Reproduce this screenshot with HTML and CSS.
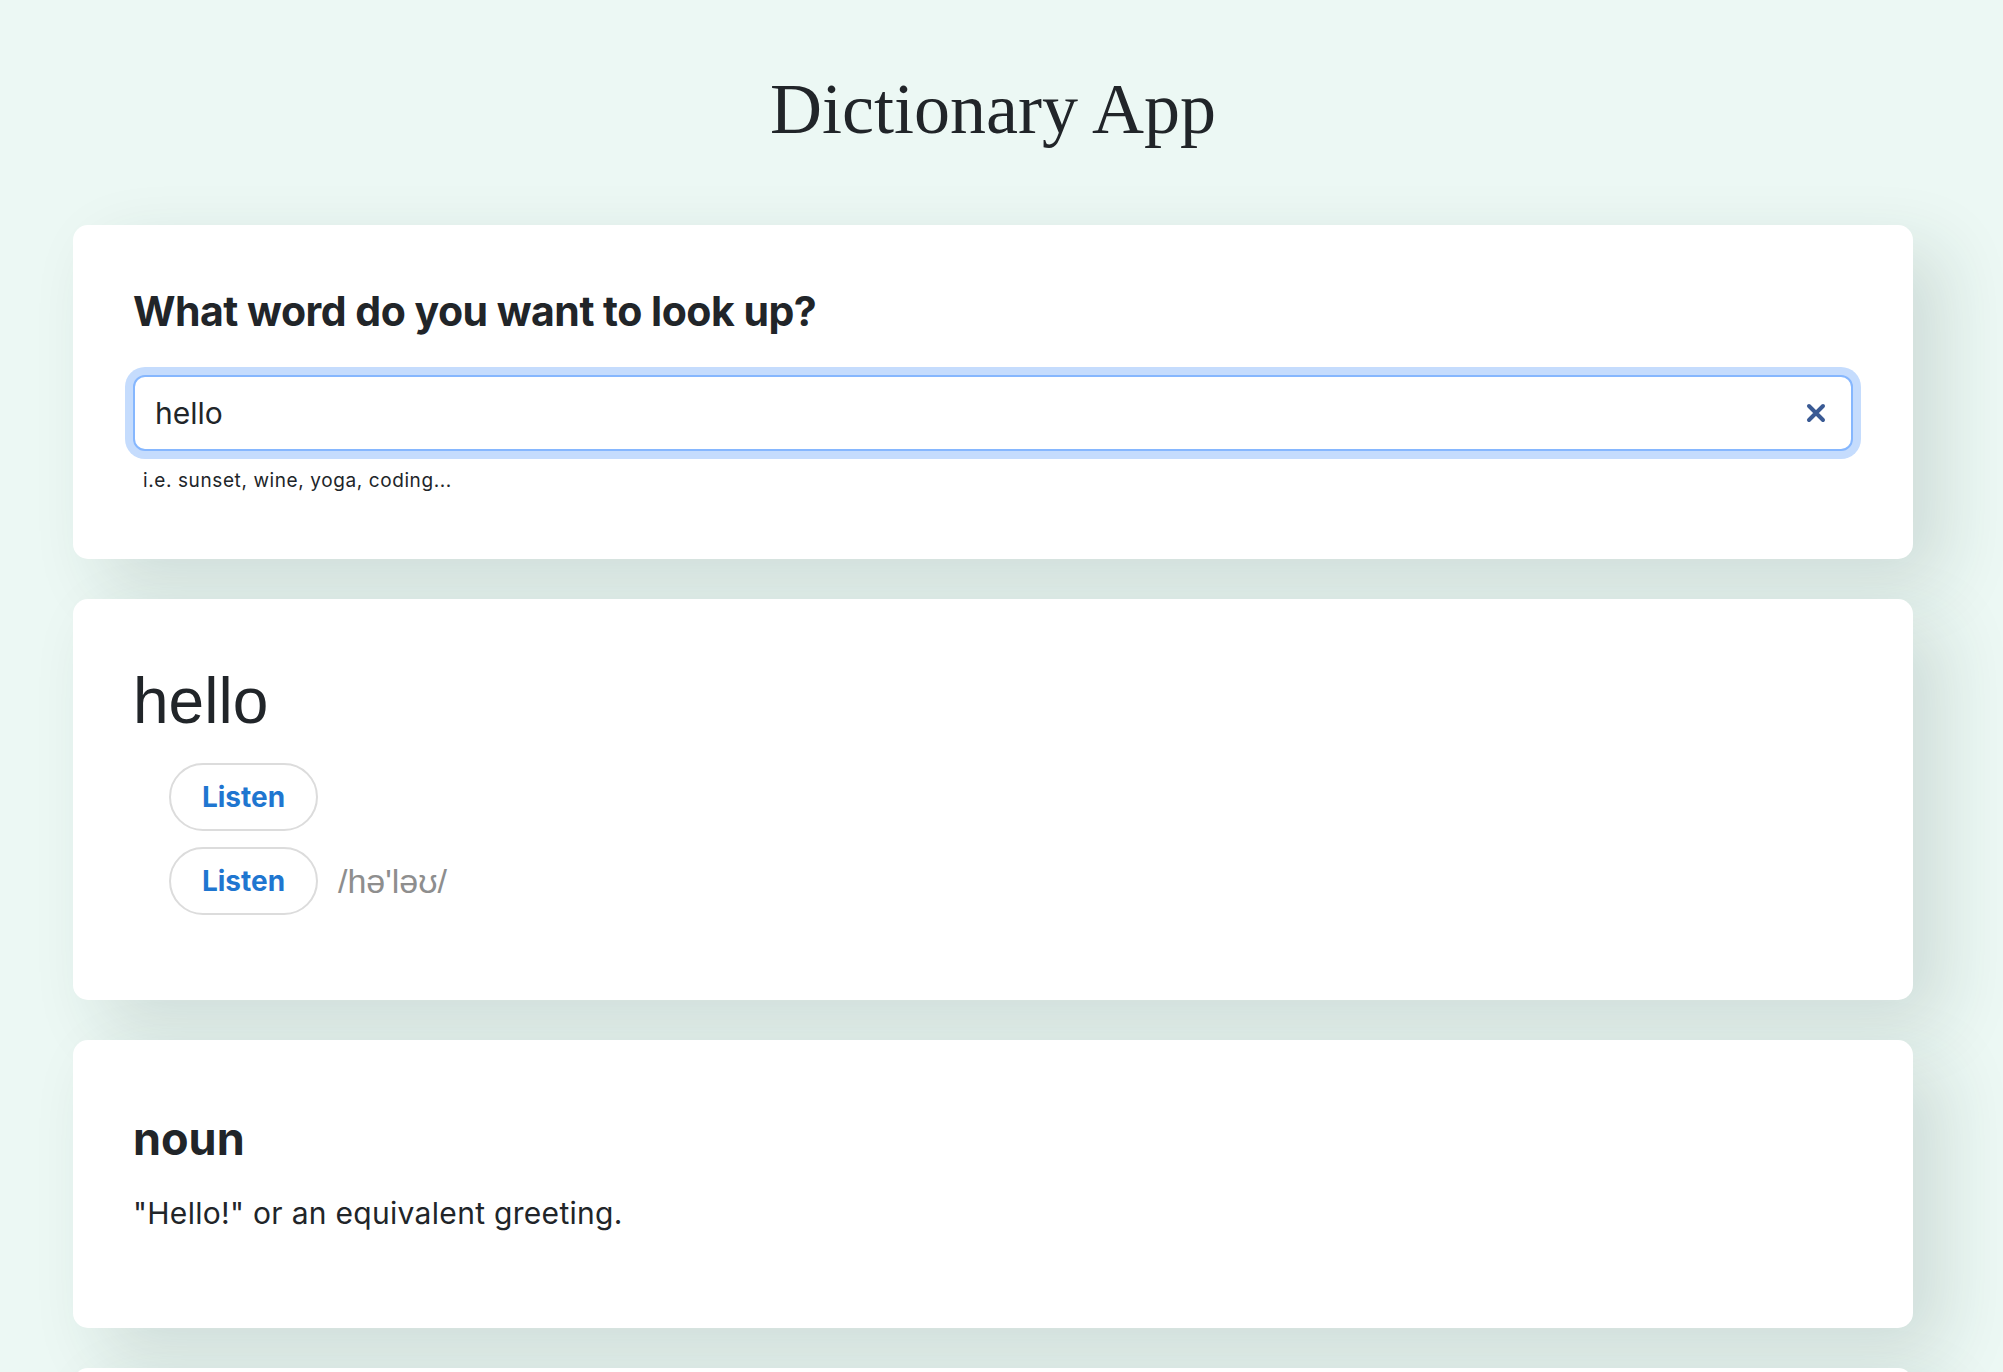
FILE: index.html
```html
<!DOCTYPE html>
<html lang="en">
<head>
<meta charset="utf-8">
<title>Dictionary App</title>
<link rel="stylesheet" href="styles.css">
</head>
<body>
<div class="page">
  <h1 class="title">Dictionary App</h1>

  <section class="card search-card">
    <h2 class="search-heading">What word do you want to look up?</h2>
    <div class="search-field">
      <input class="search-input" type="text" value="hello" aria-label="Search word">
      <button class="clear-btn" type="button" aria-label="Clear">
        <svg width="20" height="20" viewBox="0 0 20 20"><path d="M3 3 L17 17 M17 3 L3 17" stroke="#3a5a94" stroke-width="4" stroke-linecap="round" fill="none"/></svg>
      </button>
    </div>
    <p class="hint">i.e. sunset, wine, yoga, coding...</p>
  </section>

  <section class="card word-card">
    <h2 class="word">hello</h2>
    <div class="phonetics">
      <div class="phonetic-row">
        <button class="listen-btn" type="button">Listen</button>
      </div>
      <div class="phonetic-row">
        <button class="listen-btn" type="button">Listen</button>
        <span class="ipa">/hə'ləʊ/</span>
      </div>
    </div>
  </section>

  <section class="card meaning-card">
    <h3 class="pos">noun</h3>
    <p class="definition">"Hello!" or an equivalent greeting.</p>
  </section>

  <section class="card meaning-card next-card"></section>
</div>
</body>
</html>
```

FILE: styles.css
```css
* { box-sizing: border-box; }

body {
  margin: 0;
  background: #ecf8f4;
  font-family: Inter, "Noto Sans", sans-serif;
  color: #212529;
}

.page {
  width: 1840px;
  margin-left: 73px;
  padding-bottom: 40px;
}

.title {
  font-family: "Liberation Serif", "Times New Roman", serif;
  font-weight: 400;
  font-size: 72px;
  line-height: 86px;
  margin: 66px 0 73px;
  text-align: center;
  color: #212529;
}

.card {
  background: #ffffff;
  border-radius: 15px;
  padding: 62px 60px;
  margin-bottom: 40px;
  box-shadow: 30px 25px 70px rgba(30, 60, 50, 0.14);
}

.search-heading {
  font-size: 41px;
  line-height: 48px;
  font-weight: 700;
  letter-spacing: -0.5px;
  margin: 0 0 40px;
}

.search-field {
  display: flex;
  align-items: center;
  height: 76px;
  border: 2px solid #86b7fe;
  border-radius: 12px;
  box-shadow: 0 0 0 8px #c5dcfd;
  background: #fff;
  padding: 0 22px 0 20px;
}

.search-input {
  flex: 1;
  border: none;
  outline: none;
  background: transparent;
  font-family: Inter, "Noto Sans", sans-serif;
  font-size: 30px;
  color: #212529;
  padding: 0;
}

.clear-btn {
  border: none;
  background: transparent;
  padding: 0;
  width: 26px;
  height: 26px;
  display: flex;
  align-items: center;
  justify-content: center;
}

.hint {
  font-size: 19px;
  line-height: 27px;
  letter-spacing: 0.6px;
  margin: 16px 0 3px;
  padding-left: 10px;
  color: #212529;
}

.word {
  font-family: "Liberation Sans", Arial, sans-serif;
  font-weight: 400;
  font-size: 64px;
  line-height: 1.25;
  margin: 0 0 22px;
}

.phonetics {
  display: flex;
  flex-direction: column;
  gap: 16px;
  padding-left: 36px;
  margin-bottom: 23px;
}

.phonetic-row {
  display: flex;
  align-items: center;
  gap: 20px;
}

.listen-btn {
  height: 68px;
  width: 149px;
  border: 2px solid #dcdcdc;
  border-radius: 34px;
  background: #fff;
  font-family: Inter, "Noto Sans", sans-serif;
  font-weight: 700;
  font-size: 28px;
  color: #1f76d0;
  padding: 0;
}

.ipa {
  font-family: "Liberation Sans", "DejaVu Sans", sans-serif;
  font-size: 34px;
  color: #8e8e8e;
}

.pos {
  font-size: 45px;
  line-height: 50px;
  font-weight: 700;
  letter-spacing: 0;
  margin: 12px 0 28px;
}

.definition {
  font-size: 30px;
  line-height: 42px;
  letter-spacing: 0.3px;
  margin: 0 0 32px;
}

.next-card {
  min-height: 240px;
}
```
